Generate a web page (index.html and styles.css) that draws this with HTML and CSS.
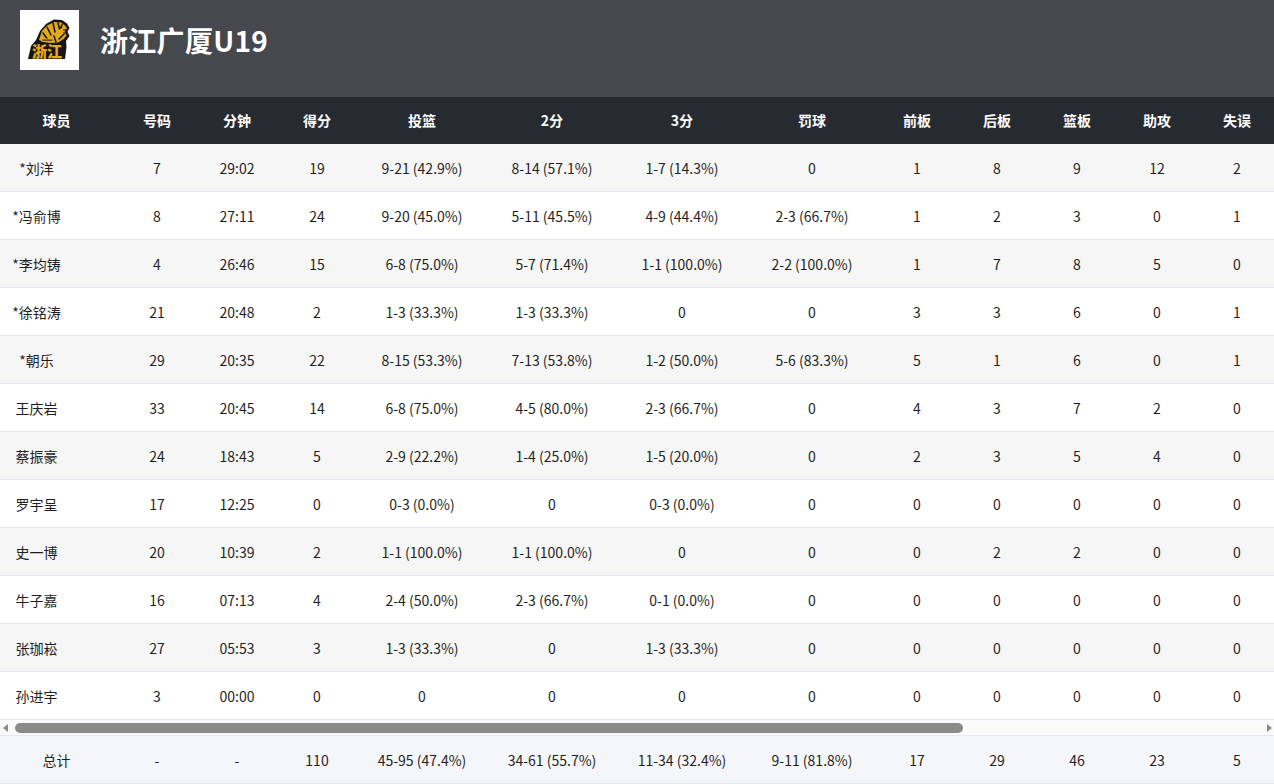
FILE: index.html
```html
<!DOCTYPE html>
<html lang="zh-CN">
<head>
<meta charset="utf-8">
<title>浙江广厦U19</title>
<link rel="stylesheet" href="styles.css">
</head>
<body>
<div class="page">
  <header class="team-header">
    <div class="logo">
      <svg width="59" height="60" viewBox="0 0 59 60">
        <path d="M8 49 L11 36 L16 30 L20 21 L26 14 L34 9.5 L42 10 L47 13.5 L49.5 18 L47.5 21.5 L49.5 26 L46 31 L46.5 37 L45 49 Z" fill="#161616"/>
        <path d="M19 30 L22 21 L27 15.5 L34 12 L41 12.5 L45 15.5 L47 18.5 L44.5 21 L46.5 25.5 L43.5 29 L38 32.5 L30 33 L24 32 Z" fill="#e3a91b"/>
        <path d="M27 17 L31 25 M33 13 L35 22 M38 13 L39.5 19 M23 23 L28 30 M42 14.5 L41 18 M44 24 L39 29 M34 26 L36 32" stroke="#161616" stroke-width="1.5" fill="none" stroke-linecap="round"/>
        <path d="M43 20 L46 19.5 M43.5 22.5 L46.5 24" stroke="#161616" stroke-width="1"/>
        <circle cx="40" cy="17.5" r="1" fill="#161616"/>
        <rect x="21" y="28.5" width="13" height="3.2" rx="0.8" fill="#e3a91b"/>
        <rect x="22.5" y="29.6" width="10" height="1" fill="#161616"/>
        <text x="12" y="46.5" class="logo-text">浙江</text>
      </svg>
    </div>
    <h1 class="team-name">浙江广厦U19</h1>
  </header>

  <div class="scroll">
    <table class="stats">
      <colgroup>
        <col class="c-name"><col class="c-s"><col class="c-s"><col class="c-s">
        <col class="c-w"><col class="c-w"><col class="c-w"><col class="c-w">
        <col class="c-s"><col class="c-s"><col class="c-s"><col class="c-s"><col class="c-s">
        <col>
      </colgroup>
      <thead>
        <tr><th class="first">球员</th><th>号码</th><th>分钟</th><th>得分</th><th>投篮</th><th>2分</th><th>3分</th><th>罚球</th><th>前板</th><th>后板</th><th>篮板</th><th>助攻</th><th>失误</th><th></th></tr>
      </thead>
      <tbody>
        <tr><td class="name">*刘洋</td><td>7</td><td>29:02</td><td>19</td><td>9-21 (42.9%)</td><td>8-14 (57.1%)</td><td>1-7 (14.3%)</td><td>0</td><td>1</td><td>8</td><td>9</td><td>12</td><td>2</td><td></td></tr>
        <tr><td class="name">*冯俞博</td><td>8</td><td>27:11</td><td>24</td><td>9-20 (45.0%)</td><td>5-11 (45.5%)</td><td>4-9 (44.4%)</td><td>2-3 (66.7%)</td><td>1</td><td>2</td><td>3</td><td>0</td><td>1</td><td></td></tr>
        <tr><td class="name">*李均铸</td><td>4</td><td>26:46</td><td>15</td><td>6-8 (75.0%)</td><td>5-7 (71.4%)</td><td>1-1 (100.0%)</td><td>2-2 (100.0%)</td><td>1</td><td>7</td><td>8</td><td>5</td><td>0</td><td></td></tr>
        <tr><td class="name">*徐铭涛</td><td>21</td><td>20:48</td><td>2</td><td>1-3 (33.3%)</td><td>1-3 (33.3%)</td><td>0</td><td>0</td><td>3</td><td>3</td><td>6</td><td>0</td><td>1</td><td></td></tr>
        <tr><td class="name">*朝乐</td><td>29</td><td>20:35</td><td>22</td><td>8-15 (53.3%)</td><td>7-13 (53.8%)</td><td>1-2 (50.0%)</td><td>5-6 (83.3%)</td><td>5</td><td>1</td><td>6</td><td>0</td><td>1</td><td></td></tr>
        <tr><td class="name">王庆岩</td><td>33</td><td>20:45</td><td>14</td><td>6-8 (75.0%)</td><td>4-5 (80.0%)</td><td>2-3 (66.7%)</td><td>0</td><td>4</td><td>3</td><td>7</td><td>2</td><td>0</td><td></td></tr>
        <tr><td class="name">蔡振豪</td><td>24</td><td>18:43</td><td>5</td><td>2-9 (22.2%)</td><td>1-4 (25.0%)</td><td>1-5 (20.0%)</td><td>0</td><td>2</td><td>3</td><td>5</td><td>4</td><td>0</td><td></td></tr>
        <tr><td class="name">罗宇呈</td><td>17</td><td>12:25</td><td>0</td><td>0-3 (0.0%)</td><td>0</td><td>0-3 (0.0%)</td><td>0</td><td>0</td><td>0</td><td>0</td><td>0</td><td>0</td><td></td></tr>
        <tr><td class="name">史一博</td><td>20</td><td>10:39</td><td>2</td><td>1-1 (100.0%)</td><td>1-1 (100.0%)</td><td>0</td><td>0</td><td>0</td><td>2</td><td>2</td><td>0</td><td>0</td><td></td></tr>
        <tr><td class="name">牛子嘉</td><td>16</td><td>07:13</td><td>4</td><td>2-4 (50.0%)</td><td>2-3 (66.7%)</td><td>0-1 (0.0%)</td><td>0</td><td>0</td><td>0</td><td>0</td><td>0</td><td>0</td><td></td></tr>
        <tr><td class="name">张珈崧</td><td>27</td><td>05:53</td><td>3</td><td>1-3 (33.3%)</td><td>0</td><td>1-3 (33.3%)</td><td>0</td><td>0</td><td>0</td><td>0</td><td>0</td><td>0</td><td></td></tr>
        <tr><td class="name">孙进宇</td><td>3</td><td>00:00</td><td>0</td><td>0</td><td>0</td><td>0</td><td>0</td><td>0</td><td>0</td><td>0</td><td>0</td><td>0</td><td></td></tr>
      </tbody>
    </table>
  </div>

  <div class="hscroll" aria-hidden="true">
    <span class="arrow arrow-left"></span>
    <div class="track"><div class="thumb"></div></div>
    <span class="arrow arrow-right"></span>
  </div>

  <div class="totals">
    <table class="stats">
      <colgroup>
        <col class="c-name"><col class="c-s"><col class="c-s"><col class="c-s">
        <col class="c-w"><col class="c-w"><col class="c-w"><col class="c-w">
        <col class="c-s"><col class="c-s"><col class="c-s"><col class="c-s"><col class="c-s">
        <col>
      </colgroup>
      <tbody>
        <tr><td class="first">总计</td><td>-</td><td>-</td><td>110</td><td>45-95 (47.4%)</td><td>34-61 (55.7%)</td><td>11-34 (32.4%)</td><td>9-11 (81.8%)</td><td>17</td><td>29</td><td>46</td><td>23</td><td>5</td><td></td></tr>
      </tbody>
    </table>
  </div>
</div>
</body>
</html>
```

FILE: styles.css
```css
* { box-sizing: border-box; }
html, body { margin: 0; padding: 0; background: #fff; }
body {
  font-family: "Noto Sans CJK SC", "Noto Sans", sans-serif;
  color: #1f1f1f;
  font-size: 14px;
}
.page { width: 1274px; }

.team-header {
  height: 97px;
  background: #45484c;
  display: flex;
  align-items: flex-start;
  padding: 10px 20px 0;
  gap: 21px;
}
.logo { width: 59px; height: 60px; background: #fff; overflow: hidden; }
.logo svg { display: block; }
.logo-text {
  font-family: "Noto Sans CJK SC", sans-serif;
  font-weight: 900;
  font-size: 15px;
  fill: #e3a91b;
}
.team-name {
  margin: 0;
  color: #fff;
  font-size: 28px;
  font-weight: 700;
  line-height: 60px;
  letter-spacing: 0.3px;
}

.scroll {
  width: 1274px;
  overflow: hidden;
}

/* horizontal scrollbar */
.hscroll {
  height: 16px;
  display: flex;
  align-items: center;
  background: #fafafa;
  border-bottom: 1px solid #e6e9f0;
}
.arrow {
  width: 12px;
  height: 15px;
  flex: none;
  display: flex;
  align-items: center;
  justify-content: center;
}
.arrow::before {
  content: "";
  width: 0;
  height: 0;
  border-top: 4.5px solid transparent;
  border-bottom: 4.5px solid transparent;
}
.arrow-left::before { border-right: 5px solid #8b8b8b; margin-right: 2px; }
.arrow-right::before { border-left: 5px solid #8b8b8b; margin-left: 2px; }
.track {
  flex: 1;
  height: 15px;
  display: flex;
  align-items: center;
  padding-left: 3px;
}
.thumb {
  width: 948px;
  height: 10px;
  border-radius: 5px;
  background: #8b8b8b;
}

.totals { width: 1274px; overflow: hidden; background: #f5f6fa; border-bottom: 1px solid #e6e9f0; }

.stats {
  table-layout: fixed;
  border-collapse: separate;
  border-spacing: 0;
  width: 1669px;
}
.c-name { width: 117px; }
.c-s { width: 80px; }
.c-w { width: 130px; }

.stats th {
  height: 47px;
  background: #262a31;
  color: #fff;
  font-weight: 700;
  font-size: 14px;
  text-align: center;
  padding: 0 0 2px;
}
.stats th.first, .stats td.first { padding-right: 4px; }
.stats td {
  height: 48px;
  text-align: center;
  padding: 0;
  border-bottom: 1px solid #e6e9f0;
  white-space: nowrap;
}
.stats td.name { padding-right: 44px; }
.stats tbody tr:nth-child(odd) td { background: #f6f6f6; }
.stats tbody tr:nth-child(even) td { background: #fff; }
.totals .stats tbody tr td { background: #f5f6fa; height: 47px; border-bottom: none; }
```
